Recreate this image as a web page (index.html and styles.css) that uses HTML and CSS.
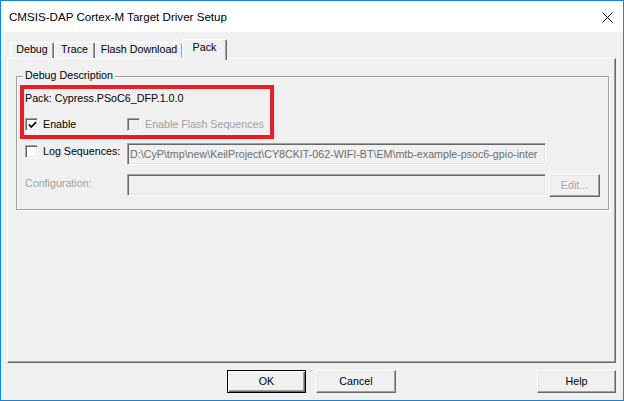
FILE: index.html
```html
<!DOCTYPE html>
<html>
<head>
<meta charset="utf-8">
<link rel="stylesheet" href="styles.css">
</head>
<body>
<div class="window">
  <div class="titlebar">
    <span class="title">CMSIS-DAP Cortex-M Target Driver Setup</span>
    <svg class="close" width="11" height="11" viewBox="0 0 11 11"><path d="M0.5 0.5 L10.5 10.5 M10.5 0.5 L0.5 10.5" stroke="#000" stroke-width="1" fill="none"/></svg>
  </div>
  <div class="client">
    <div class="tabs">
      <div class="tab tab-debug">Debug</div>
      <div class="tab tab-trace">Trace</div>
      <div class="tab tab-flash">Flash Download</div>
      <div class="tab tab-pack active">Pack</div>
    </div>
    <div class="panel">
      <div class="group">
        <div class="group-title">Debug Description</div>
        <div class="highlight">
          <div class="pack-line">Pack: Cypress.PSoC6_DFP.1.0.0</div>
          <div class="check-row">
            <div class="check col1"><span class="box"><svg width="9" height="9" viewBox="0 0 9 9"><path d="M1 3.6 L3.3 6 L8 1.2" stroke="#000" stroke-width="1.7" fill="none"/></svg></span><span>Enable</span></div>
            <div class="check disabled"><span class="box off"></span><span>Enable Flash Sequences</span></div>
          </div>
        </div>
        <div class="field-row log-row">
          <div class="check col1 log-label"><span class="box"></span><span>Log Sequences:</span></div>
          <div class="edit">D:\CyP\tmp\new\KeilProject\CY8CKIT-062-WIFI-BT\EM\mtb-example-psoc6-gpio-inter</div>
        </div>
        <div class="field-row config-row">
          <div class="col1 config-label disabled">Configuration:</div>
          <div class="edit"></div>
          <div class="btn edit-btn disabled">Edit...</div>
        </div>
      </div>
    </div>
    <div class="buttons">
      <div class="btn default">OK</div>
      <div class="btn cancel">Cancel</div>
      <div class="btn help">Help</div>
    </div>
  </div>
</div>
</body>
</html>
```
FILE: styles.css
```css
* { box-sizing: border-box; }
html, body { margin: 0; padding: 0; }
body {
  width: 624px;
  height: 401px;
  overflow: hidden;
  font-family: "Liberation Sans", Arial, sans-serif;
  font-size: 10.7px;
  line-height: 13px;
  color: #000;
  background: #fff;
}
.window {
  width: 624px;
  height: 401px;
  border: 1px solid #1883d7;
  display: flex;
  flex-direction: column;
  background: #f0f0f0;
}
.titlebar {
  height: 31px;
  flex: none;
  background: #fff;
  display: flex;
  align-items: center;
  padding: 0 10px 0 8px;
  font-size: 11.6px;
  line-height: 15px;
}
.close { margin-left: auto; margin-top: 1px; }
.client {
  flex: 1;
  display: flex;
  flex-direction: column;
  padding: 7px 7px 7px 6px;
}
.tabs {
  display: flex;
  align-items: flex-end;
  height: 19px;
  padding-left: 3px;
  flex: none;
}
.tab {
  height: 16px;
  border-top: 1px solid #fff;
  border-left: 1px solid #fff;
  border-right: 1px solid #696969;
  box-shadow: inset -1px 0 0 #a0a0a0;
  border-radius: 2px 2px 0 0;
  text-align: center;
  background: #f0f0f0;
}
.tab-debug { width: 44px; }
.tab-trace { width: 41px; }
.tab-flash { width: 88px; }
.tab.active {
  width: 45px;
  height: 21px;
  margin: 0 0 -2px -1px;
  padding-top: 1px;
  position: relative;
  z-index: 1;
}
.panel {
  flex: none;
  height: 305px;
  border-top: 1px solid #fff;
  border-left: 1px solid #fff;
  border-right: 1px solid #696969;
  border-bottom: 1px solid #696969;
  box-shadow: inset -1px -1px 0 #a0a0a0;
  padding: 17px 6px 0 8px;
}
.group {
  border: 1px solid #a0a0a0;
  box-shadow: 1px 1px 0 #fff, inset 1px 1px 0 #fff;
  padding: 0 7px 12px 0;
}
.group-title {
  margin: -8px 0 0 6px;
  padding: 0 2px;
  background: #f0f0f0;
  width: max-content;
  height: 13px;
}
.highlight {
  margin: 3px 0 0 3px;
  width: 254px;
  height: 54px;
  border: 4px solid #ed1c24;
  padding: 3px 0 0 1px;
}
.pack-line { height: 13px; }
.check-row {
  display: flex;
  align-items: center;
  height: 13px;
  margin-top: 13px;
}
.check {
  display: flex;
  align-items: center;
  gap: 5px;
  white-space: nowrap;
}
.col1 { width: 102px; flex: none; padding-left: 0; }
.box {
  width: 13px;
  height: 13px;
  flex: none;
  display: flex;
  align-items: center;
  justify-content: center;
  background: #fff;
  border-top: 1px solid #a0a0a0;
  border-left: 1px solid #a0a0a0;
  border-right: 1px solid #fff;
  border-bottom: 1px solid #fff;
  box-shadow: inset 1px 1px 0 #696969, inset -1px -1px 0 #e3e3e3;
}
.box.off { background: #f0f0f0; }
.box svg { margin: 1px 0 0 1px; }
.disabled { color: #a0a0a0; }
.field-row {
  display: flex;
  align-items: flex-start;
  padding-left: 8px;
}
.log-row { height: 22px; margin-top: 4px; }
.config-row { height: 23px; margin-top: 9px; }
.log-label { margin-top: 2px; }
.config-label { margin-top: 3px; }
.edit {
  width: 419px;
  height: 22px;
  flex: none;
  background: #f0f0f0;
  border-style: solid;
  border-width: 1px;
  border-color: #a0a0a0 #fff #fff #a0a0a0;
  box-shadow: inset 1px 1px 0 #696969, inset -1px -1px 0 #e3e3e3;
  padding: 0 0 0 2px;
  color: #6d6d6d;
  overflow: hidden;
  white-space: nowrap;
  line-height: 20px;
}
.btn {
  height: 23px;
  flex: none;
  background: #f0f0f0;
  border-style: solid;
  border-width: 1px;
  border-color: #fff #696969 #696969 #fff;
  box-shadow: inset -1px -1px 0 #a0a0a0, inset 1px 1px 0 #e3e3e3;
  text-align: center;
  line-height: 21px;
}
.edit-btn {
  width: 51px;
  margin-left: 3px;
  text-shadow: 1px 1px 0 #fff;
}
.buttons {
  display: flex;
  height: 23px;
  margin-top: 7px;
  padding-left: 220px;
  flex: none;
}
.btn.default {
  width: 79px;
  border-color: #000;
  box-shadow: inset 1px 1px 0 #fff, inset -1px -1px 0 #696969, inset -2px -2px 0 #a0a0a0;
}
.btn.cancel { width: 80px; margin-left: 10px; }
.btn.help { width: 79px; margin-left: auto; }
```
